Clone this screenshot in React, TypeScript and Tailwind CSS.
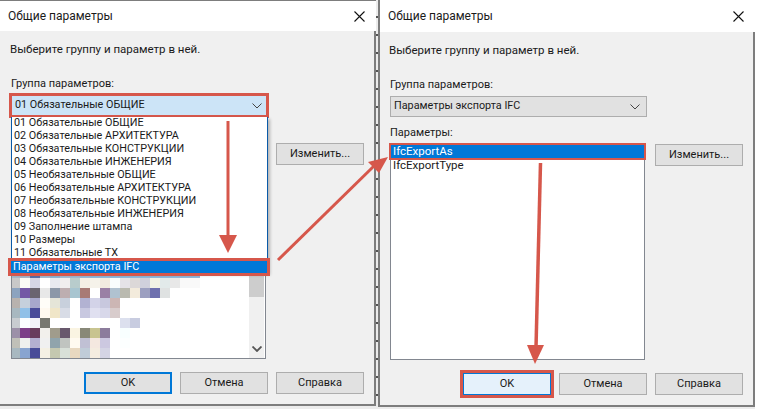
import React from 'react';

const groups = [
    '01 Обязательные ОБЩИЕ',
    '02 Обязательные АРХИТЕКТУРА',
    '03 Обязательные КОНСТРУКЦИИ',
    '04 Обязательные ИНЖЕНЕРИЯ',
    '05 Необязательные ОБЩИЕ',
    '06 Необязательные АРХИТЕКТУРА',
    '07 Необязательные КОНСТРУКЦИИ',
    '08 Необязательные ИНЖЕНЕРИЯ',
    '09 Заполнение штампа',
    '10 Размеры',
    '11 Обязательные ТХ',
];

// blurred list rows behind the dropdown
const mosaic = [
    ['#c8c8c8', '#fafaf5', '#d5d5e5', '#ffffff', '#e8eaf0', '#f0eeee', '#b8cccc', '#f5efe5', '#f5f2ea', '#f2ebe0', '#f8fdfd', '#e5e3e8', '#dcd8d8', '#d0d0dc', '#f2f2e5', '#e2eaea', '#e8e8e8', '#f9f9f9', '#f9f9f9'],
    ['#8ca3bf', '#7358a5', '#6a6470', '#e8e8e8', '#8c98a8', '#bdaeb0', '#a8c5d0', '#a87a75', '#ffffff', '#9a80a5', '#b0c2d0', '#babab0', '#f3ebdc', '#9c9fc0', '#6e70ae', '#dfe2e2'],
    ['#b8b2ae', '#c5d0dc', '#a8a8cc', '#fffdf8', '#e5e5d8', '#c8d0dc', '#ffffff', '#b2b2d2', '#d3d3e8', '#c8c8de', '#ccb6b4'],
    ['#a8b8c0', '#90c0e8', '#4a4c9a', '#fff9f0', '#f0e6c8', '#d8dce6', '#ffffff', '#c8c8e0', '#e0e0f0', '#d8d8ea', '#d8cccc'],
    ['#c8ccd0', '#fafdff', '#f2f2f8', '#777770', '#ffffff', '#ffffff', '#ffffff', '#ffffff', '#ffffff', '#ffffff', '#ffffff', '#dce0ee', '#c8cce0'],
    ['#9c90a8', '#7c3f88', '#683c5c', '#f2f0ec', '#a09c8c', '#68586c', '#faf4e2', '#888878', '#c8c490', '#8c7c9c', '#ffffff', '#f8ffff'],
    ['#c0c0b8', '#eef0ee', '#b4b0d0', '#f0f0f0', '#90a4ac', '#c0c4c0', '#fffaf0', '#c0c0d4', '#f4e8e0', '#ccc8e0', '#ffffff', '#fcffff'],
    ['#a8b8c0', '#88a4d0', '#484c98', '#f4f0e4', '#c4c8b0', '#d8e0d8', '#e8d8c0', '#c0ccd8', '#f4ece0', '#d4d4e4', '#ffffff', '#ffffff', '#ffffff', '#ffffff', '#ffffff', '#ffffff', '#ffffff', '#ffffff', '#ffffff'],
];
const strip = ['#a8b8c8', '#a8b4c8', '#5a6ea8', '#a4bcd4', '#90b4d4', '#a4bcd4', '#a0b8d0', '#98b8d8', '#90b8dc', '#90b8dc', '#90b8dc', '#90b8dc', '#90b8dc', '#90b8dc', '#90b8dc', '#90b8dc', '#90b8dc', '#90b8dc', '#90b8dc'];

const Chevron = ({ bold }: { bold?: boolean }) => (
    <svg width="10" height="6" viewBox="0 0 10 6" fill="none" stroke={bold ? '#555555' : '#444444'} strokeWidth={bold ? 1.8 : 1}>
        <path d="M0.5 0.5 L5 5 L9.5 0.5" />
    </svg>
);

const Btn = ({ children, className = '' }: { children: React.ReactNode; className?: string }) => (
    <div className={`w-[88px] h-[22px] flex items-center justify-center border border-[#adadad] bg-[#e1e1e1] ${className}`}>
        {children}
    </div>
);

const Dialog = ({ className, titleClass, list, combo, okClass, paramsLabel }: { className: string; titleClass: string; list: React.ReactNode; combo: React.ReactNode; okClass: string; paramsLabel?: string }) => (
    <div className={`flex flex-col shrink-0 bg-[#f0f0f0] border-[#7d7d7d] ${className}`}>
        <div className={`bg-white flex items-center justify-between pr-[9px] -mr-[2px] ${titleClass}`}>
            <span className="pl-[8px] text-[12px]">Общие параметры</span>
            <svg width="11" height="11" viewBox="0 0 11 11" stroke="#111111" strokeWidth="1.1" className="mr-[2px]">
                <path d="M0.5 0.5 L10.5 10.5 M10.5 0.5 L0.5 10.5" />
            </svg>
        </div>
        <div className="flex flex-col flex-1 pr-[10px]">
            <p className="mt-[10px] h-[16px] leading-[16px] -ml-px text-[11.5px]">Выберите группу и параметр в ней.</p>
            <p className="mt-[19px] h-[16px] leading-[16px]">Группа параметров:</p>
            {combo}
            {/* под открытым списком подпись не видна, место остаётся пустым */}
            <p className="mt-[8px] h-[16px] leading-[16px]">{paramsLabel}</p>
            <div className="flex gap-[10px] mt-[3px]">
                <div className="w-[255px] h-[216px] bg-white border border-[#828790] relative">{list}</div>
                <Btn>Изменить...</Btn>
            </div>
            <div className="flex justify-end gap-[8px] mt-[13px]">
                <Btn className={okClass}>OK</Btn>
                <Btn>Отмена</Btn>
                <Btn>Справка</Btn>
            </div>
        </div>
    </div>
);

const App = () => {
    return (
        <div className="relative w-[757px] h-[409px] overflow-hidden bg-[#ececec] flex items-start text-[11px] text-[#1a1a1a] font-['Roboto',sans-serif]">
            <Dialog
                className="w-[376px] h-[406px] border-r-2 border-b-2 border-t [&>div:last-child]:pl-[11px]"
                titleClass="h-[30px]"
                okClass="!border-2 !border-[#0078d7]"
                combo={
                    <div className="relative mt-[3px] w-[256px] text-[10.8px]">
                        <div className="h-[21px] flex items-center justify-between pl-[3px] pr-[4px] bg-[#cce4f7] border border-[#005499] outline-[3px] -outline-offset-1 outline-[#d6574b]">
                            <span>01 Обязательные ОБЩИЕ</span>
                            <Chevron />
                        </div>
                        {/* Открытый выпадающий список */}
                        <div className="absolute z-10 top-[22px] left-0 w-[257px] h-[156px] bg-white border-x border-[#0a5aa8] leading-[12px] shadow-[2px_2px_3px_rgba(0,0,0,0.25)]">
                            {groups.map((g) => (
                                <div key={g} className="h-[13px] pl-[2px] whitespace-nowrap">{g}</div>
                            ))}
                            <div className="h-[12px] mt-[1px] -ml-px pl-[2px] bg-[#0078d7] text-white whitespace-nowrap outline-[3px] outline-[#d6574b]">
                                Параметры экспорта IFC
                            </div>
                        </div>
                    </div>
                }
                list={
                    <div className="flex h-full">
                        <div className="flex-1 flex flex-col justify-end">
                            <div className="flex h-[3px]">
                                {strip.map((c, i) => (
                                    <div key={i} className={i === 0 ? 'w-[8px]' : 'w-[10px]'} style={{ backgroundColor: c }} />
                                ))}
                            </div>
                            {mosaic.map((row, r) => (
                                <div key={r} className="flex h-[10px]">
                                    {row.map((c, i) => (
                                        <div key={i} className={i === 0 ? 'w-[8px]' : 'w-[10px]'} style={{ backgroundColor: c }} />
                                    ))}
                                </div>
                            ))}
                        </div>
                        <div className="w-[15px] mr-[1px] flex flex-col items-center bg-[#f0f0f0]">
                            <div className="w-full h-[153px] bg-[#cdcdcd]" />
                            <div className="mt-auto mb-[6px]"><Chevron bold /></div>
                        </div>
                    </div>
                }
            />
            {/* узкая полоска фона между окнами */}
            <div className="w-[2px] h-full shrink-0 bg-[repeating-linear-gradient(180deg,transparent_0_16px,#555555_16px_18px)]" />
            <Dialog
                className="w-[377px] h-[407px] border-x-2 border-b-2 [&>div:last-child]:pl-[10px]"
                titleClass="h-[32px]"
                okClass="!bg-[#e5f1fb] !border-[#0078d7] outline-[3px] outline-[#d6574b]"
                paramsLabel="Параметры:"
                combo={
                    <div className="mt-[3px] w-[257px] h-[21px] flex items-center justify-between pl-[3px] pr-[6px] bg-[#e1e1e1] border border-[#adadad] text-[10.8px]">
                        <span>Параметры экспорта IFC</span>
                        <Chevron />
                    </div>
                }
                list={
                    <div className="leading-[12px] text-[11.5px]">
                        <div className="h-[13px] pl-[2px] bg-[#0078d7] text-white outline-[2px] outline-[#d6574b]">IfcExportAs</div>
                        <div className="h-[13px] pl-[2px] mt-[1px]">IfcExportType</div>
                    </div>
                }
            />
            <div className="flex-1 h-full bg-white" />
            {/* Стрелки поверх снимка */}
            <svg className="absolute inset-0 z-20 pointer-events-none" width="757" height="409" viewBox="0 0 757 409" fill="#d6574b" stroke="none">
                <path d="M228 121 L228 238" stroke="#d6574b" strokeWidth="3" />
                <polygon points="219,235 237,235 228,253" />
                <path d="M278 260 L374 166" stroke="#d6574b" strokeWidth="3" />
                <polygon points="388,157 368,162 379,173" />
                <path d="M540.5 163 L536 348" stroke="#d6574b" strokeWidth="3.5" />
                <polygon points="527,345 544,345 535,364" />
            </svg>
        </div>
    );
};

export default App;
